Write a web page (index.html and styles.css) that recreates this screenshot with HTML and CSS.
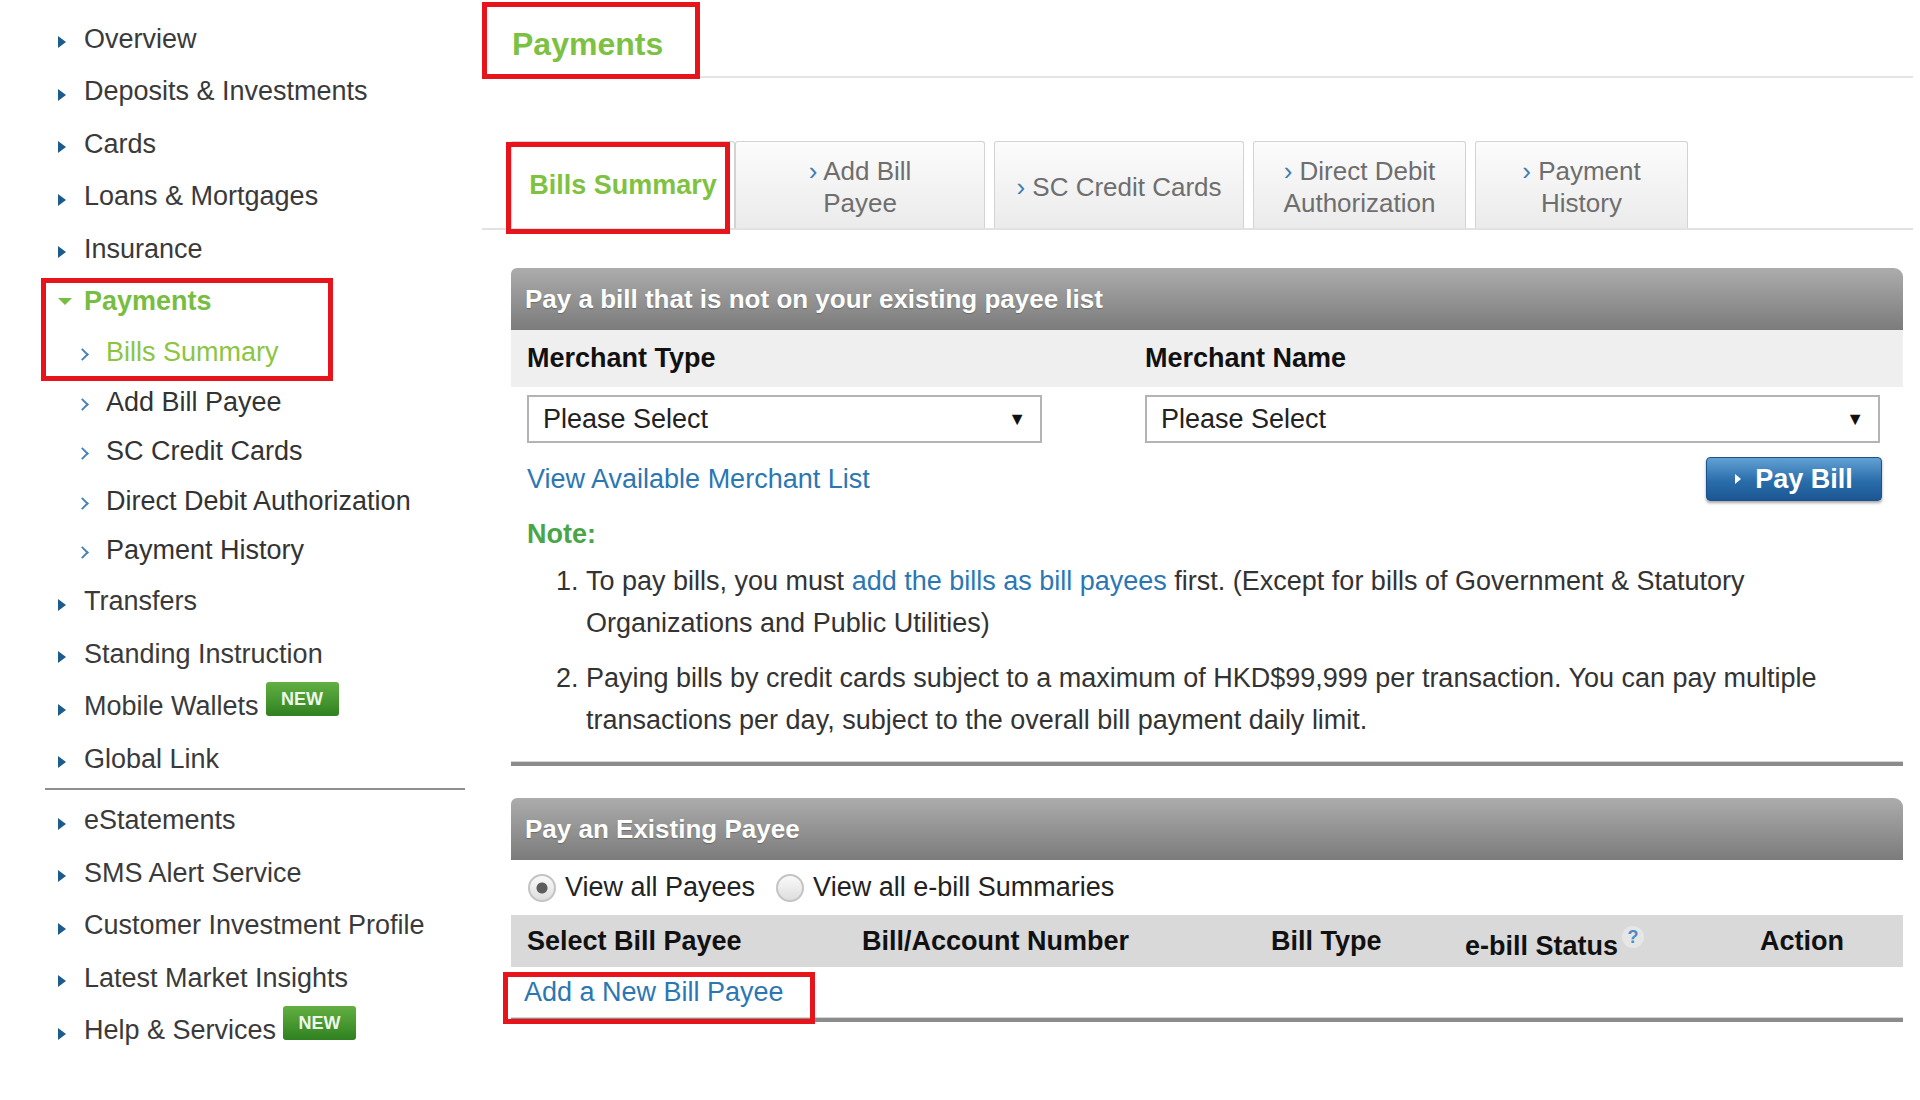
FILE: index.html
```html
<!DOCTYPE html>
<html lang="en">
<head>
    <meta charset="UTF-8">
    <meta name="viewport" content="width=device-width, initial-scale=1.0">
    <title>Payments | Bills Summary</title>
    <link rel="stylesheet" href="styles.css">
</head>
<body>
    <div class="layout">
        <!-- Side navigation -->
        <nav class="side-nav">
            <ul class="nav">
                <li><a class="nav-link" href="#">Overview</a></li>
                <li><a class="nav-link" href="#">Deposits &amp; Investments</a></li>
                <li><a class="nav-link" href="#">Cards</a></li>
                <li><a class="nav-link" href="#">Loans &amp; Mortgages</a></li>
                <li><a class="nav-link" href="#">Insurance</a></li>
                <li class="nav-open annot">
                    <a class="nav-link" href="#">Payments</a>
                    <ul class="sub-nav">
                        <li><a class="sub-link is-current" href="#">Bills Summary</a></li>
                        <li><a class="sub-link" href="#">Add Bill Payee</a></li>
                        <li><a class="sub-link" href="#">SC Credit Cards</a></li>
                        <li><a class="sub-link" href="#">Direct Debit Authorization</a></li>
                        <li><a class="sub-link" href="#">Payment History</a></li>
                    </ul>
                </li>
                <li><a class="nav-link" href="#">Transfers</a></li>
                <li><a class="nav-link" href="#">Standing Instruction</a></li>
                <li><a class="nav-link" href="#">Mobile Wallets<span class="badge">NEW</span></a></li>
                <li><a class="nav-link" href="#">Global Link</a></li>
                <li class="nav-sep"></li>
                <li><a class="nav-link" href="#">eStatements</a></li>
                <li><a class="nav-link" href="#">SMS Alert Service</a></li>
                <li><a class="nav-link" href="#">Customer Investment Profile</a></li>
                <li><a class="nav-link" href="#">Latest Market Insights</a></li>
                <li><a class="nav-link" href="#">Help &amp; Services<span class="badge">NEW</span></a></li>
            </ul>
        </nav>

        <!-- Main content -->
        <main class="content">
            <div class="title-bar">
                <h1 class="page-title annot">Payments</h1>
            </div>

            <div class="tabs">
                <a class="tab is-active annot" href="#"><span>Bills Summary</span></a>
                <a class="tab tab-wide" href="#"><span><span class="chev">›</span> Add Bill<br>Payee</span></a>
                <a class="tab tab-wide" href="#"><span><span class="chev">›</span> SC Credit Cards</span></a>
                <a class="tab" href="#"><span><span class="chev">›</span> Direct Debit<br>Authorization</span></a>
                <a class="tab" href="#"><span><span class="chev">›</span> Payment<br>History</span></a>
            </div>

            <!-- Pay a bill not on payee list -->
            <section class="box">
                <div class="box-head">Pay a bill that is not on your existing payee list</div>
                <div class="field-labels">
                    <span>Merchant Type</span>
                    <span>Merchant Name</span>
                </div>
                <div class="field-row">
                    <div class="select select-short"><span>Please Select</span><span class="select-arrow">▼</span></div>
                    <div class="select"><span>Please Select</span><span class="select-arrow">▼</span></div>
                </div>
                <div class="action-row">
                    <a class="link" href="#">View Available Merchant List</a>
                    <button class="btn-primary" type="button">Pay Bill</button>
                </div>
                <div class="note">
                    <div class="note-title">Note:</div>
                    <ol class="note-list">
                        <li>To pay bills, you must <a class="link" href="#">add the bills as bill payees</a> first. (Except for bills of Government &amp; Statutory Organizations and Public Utilities)</li>
                        <li>Paying bills by credit cards subject to a maximum of HKD$99,999 per transaction. You can pay multiple transactions per day, subject to the overall bill payment daily limit.</li>
                    </ol>
                </div>
            </section>

            <!-- Existing payees -->
            <section class="box box-payees">
                <div class="box-head">Pay an Existing Payee</div>
                <div class="radio-row">
                    <label class="radio-label"><input type="radio" name="view" checked> View all Payees</label>
                    <label class="radio-label"><input type="radio" name="view"> View all e-bill Summaries</label>
                </div>
                <div class="table-head">
                    <span>Select Bill Payee</span>
                    <span>Bill/Account Number</span>
                    <span>Bill Type</span>
                    <span class="status-col">e-bill Status<span class="help">?</span></span>
                    <span>Action</span>
                </div>
                <div class="add-row">
                    <a class="link add-payee annot" href="#">Add a New Bill Payee</a>
                </div>
            </section>
        </main>
    </div>
</body>
</html>
```

FILE: styles.css
```css
*, *::before, *::after {
    margin: 0;
    padding: 0;
    box-sizing: border-box;
}

body {
    font-family: 'Liberation Sans', Arial, Helvetica, sans-serif;
    font-size: 27px;
    color: #333;
    background: #fff;
}

a {
    text-decoration: none;
}

.layout {
    display: flex;
    align-items: flex-start;
}

/* Red annotation boxes */
.annot {
    position: relative;
}

.annot::after {
    content: '';
    position: absolute;
    border: 5px solid #e8141b;
    pointer-events: none;
}

/* ---------- Side navigation ---------- */
.side-nav {
    width: 420px;
    margin-left: 45px;
    padding-top: 12.75px;
    flex-shrink: 0;
}

.nav, .sub-nav {
    list-style: none;
}

.nav-link {
    display: flex;
    align-items: center;
    height: 52.5px;
    padding-left: 13px;
    color: #3a3a3a;
}

.nav-link::before {
    content: '';
    border-left: 8px solid #1d5b8c;
    border-top: 6px solid transparent;
    border-bottom: 6px solid transparent;
    margin-right: 18px;
    position: relative;
    top: 3px;
}

.nav-open > .nav-link {
    color: #78bd43;
    font-weight: bold;
}

.nav-open > .nav-link::before {
    border-top: 7px solid #78bd43;
    border-left: 7px solid transparent;
    border-right: 7px solid transparent;
    border-bottom: none;
    margin-right: 12px;
    top: 0;
}

.nav-open::after {
    top: 3px;
    left: -4px;
    width: 292px;
    height: 103px;
}

.sub-link {
    display: flex;
    align-items: center;
    height: 49.5px;
    padding-left: 36px;
    color: #333;
}

.sub-link::before {
    content: '';
    width: 9px;
    height: 9px;
    border-top: 2px solid #4a84b6;
    border-right: 2px solid #4a84b6;
    transform: rotate(45deg);
    margin-right: 16px;
    position: relative;
    left: -3px;
    top: 2px;
}

.sub-link.is-current {
    color: #8bc541;
}

.nav-sep {
    height: 2px;
    margin: 3px 0 4px;
    background: #8e8e8e;
}

.badge {
    display: inline-block;
    width: 73px;
    height: 34px;
    margin-left: 7px;
    line-height: 34px;
    text-align: center;
    font-size: 18px;
    font-weight: bold;
    color: #eef7e8;
    background: linear-gradient(#62b043, #2f8020);
    border-radius: 3px;
    position: relative;
    top: -8px;
}

/* ---------- Main content ---------- */
.content {
    flex: 1;
    margin: 0 7px 0 17px;
}

.title-bar {
    border-bottom: 2px solid #e4e4e4;
}

.page-title {
    width: 218px;
    height: 76px;
    padding: 26px 0 0 30px;
    font-size: 32px;
    line-height: 36px;
    color: #7cc142;
}

.page-title::after {
    top: 2px;
    left: 0;
    width: 218px;
    height: 77px;
}

/* Tabs */
.tabs {
    display: flex;
    margin-top: 63px;
    padding-left: 28px;
    border-bottom: 2px solid #e2e2e2;
}

.tab {
    width: 213px;
    height: 87px;
    margin-right: 9px;
    padding-top: 4px;
    display: flex;
    align-items: center;
    justify-content: center;
    text-align: center;
    font-size: 26px;
    line-height: 32px;
    color: #6e6e6e;
    background: linear-gradient(#fcfcfc, #ebebeb);
    border: 1px solid #d3d3d3;
    border-bottom: none;
    border-radius: 3px 3px 0 0;
}

.tab-wide {
    width: 250px;
}

.tab.is-active {
    width: 225px;
    margin-right: 0;
    padding-top: 0;
    font-size: 27px;
    color: #7fc241;
    font-weight: bold;
    background: #fff;
    border-left: 2px solid #dcdcdc;
}

.tab.is-active::after {
    top: 0;
    left: -6px;
    width: 224px;
    height: 92px;
}

.chev {
    color: #3f7db3;
}

/* Boxes */
.box {
    margin: 38px 10px 0 29px;
    padding-bottom: 21px;
    border-bottom: 4px solid #8b8b8b;
    box-shadow: 0 -1px 0 #d6d6d6 inset;
}

.box-head {
    height: 62px;
    line-height: 62px;
    padding-left: 14px;
    font-size: 26px;
    font-weight: bold;
    color: #fff;
    text-shadow: 0 1px 1px rgba(0, 0, 0, 0.25);
    background: linear-gradient(#acacac, #7b7b7b);
    border-radius: 6px 9px 0 0;
}

.field-labels {
    display: grid;
    grid-template-columns: 618px 1fr;
    align-items: center;
    height: 57px;
    padding-left: 16px;
    font-weight: bold;
    color: #111;
    background: #efefef;
}

.field-row {
    display: grid;
    grid-template-columns: 618px 1fr;
    padding: 8px 23px 0 16px;
}

.select {
    display: flex;
    justify-content: space-between;
    align-items: center;
    height: 48px;
    padding: 0 14px;
    color: #222;
    background: #fff;
    border: 2px solid #b4b4b4;
}

.select-short {
    width: 515px;
}

.select-arrow {
    font-size: 18px;
    color: #111;
}

.action-row {
    display: flex;
    justify-content: space-between;
    align-items: center;
    padding: 14px 21px 0 16px;
}

.link {
    color: #2b77b3;
}

.btn-primary {
    display: flex;
    align-items: center;
    justify-content: center;
    width: 176px;
    height: 44px;
    font-family: inherit;
    font-size: 27px;
    font-weight: bold;
    color: #fff;
    background: linear-gradient(#62a1d4, #2a6dab 55%, #1b5693);
    border: 1px solid #1a528c;
    border-radius: 4px;
    box-shadow: 0 2px 3px rgba(0, 0, 0, 0.35);
    cursor: pointer;
}

.btn-primary::before {
    content: '';
    border-left: 6px solid #fff;
    border-top: 5px solid transparent;
    border-bottom: 5px solid transparent;
    margin-right: 14px;
}

.note {
    padding: 16px 14px 0 16px;
}

.note-title {
    font-weight: bold;
    line-height: 34px;
    color: #49a547;
}

.note-list {
    margin-top: 9px;
    padding-left: 59px;
    line-height: 42px;
}

.note-list li + li {
    margin-top: 13px;
}

/* Existing payee */
.box-payees {
    margin-top: 32px;
    padding-bottom: 0;
}

.radio-row {
    display: flex;
    align-items: center;
    height: 55px;
    padding-left: 17px;
}

.radio-label {
    display: flex;
    align-items: center;
    color: #222;
    margin-right: 21px;
}

.radio-label input {
    appearance: none;
    width: 28px;
    height: 28px;
    margin-right: 9px;
    border-radius: 50%;
    border: 2px solid #c4c4c4;
    background: linear-gradient(#fafafa, #dedede);
}

.radio-label input:checked {
    background: radial-gradient(circle, #5d5d5d 0 5px, transparent 6px), linear-gradient(#fafafa, #dedede);
}

.table-head {
    display: grid;
    grid-template-columns: 335px 409px 194px 295px 1fr;
    align-items: center;
    height: 52px;
    padding-left: 16px;
    font-weight: bold;
    color: #111;
    background: #d9d9d9;
}

.status-col {
    position: relative;
    top: 3px;
}

.help {
    display: inline-block;
    width: 22px;
    height: 22px;
    margin-left: 4px;
    line-height: 22px;
    text-align: center;
    font-size: 18px;
    color: #4a8cc7;
    background: #e6e6e6;
    border-radius: 50%;
    vertical-align: 12px;
}

.add-row {
    display: flex;
    align-items: center;
    height: 51px;
    padding-left: 13px;
}

.add-payee {
    line-height: 31px;
}

.add-payee::after {
    top: -5px;
    left: -21px;
    width: 312px;
    height: 52px;
}
```
